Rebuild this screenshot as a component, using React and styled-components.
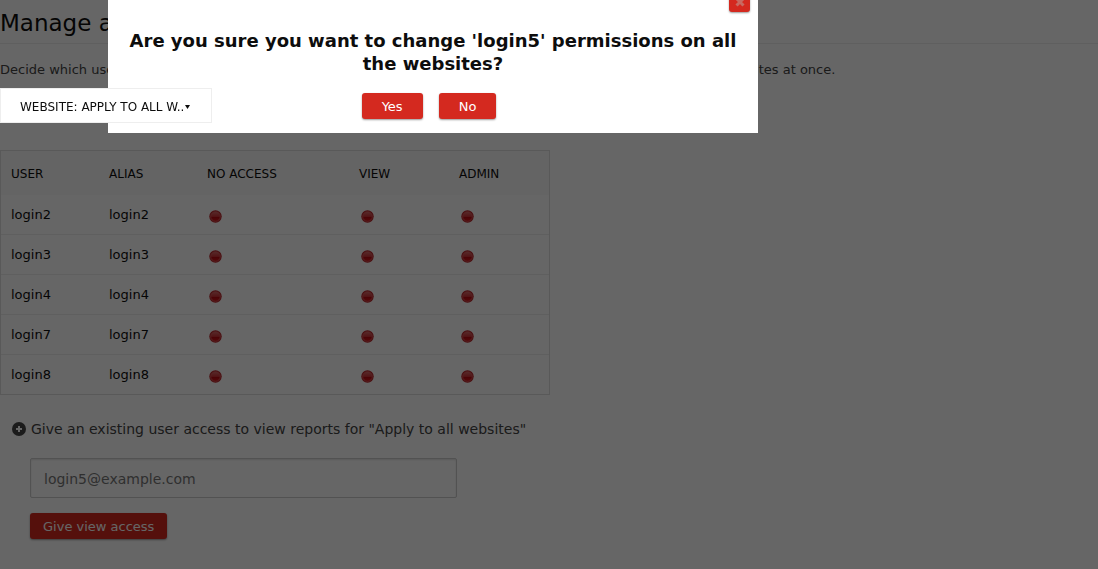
import React from "react";
import styled, { createGlobalStyle } from "styled-components";

const GlobalStyle = createGlobalStyle`
  * { box-sizing: border-box; }
  body {
    margin: 0;
    background: #fff;
    color: #0d0d0d;
    font-family: "DejaVu Sans", Verdana, sans-serif;
    font-size: 13px;
  }
  button, input, select { font-family: inherit; }
`;

const Page = styled.main`
  min-height: 100vh;
  padding-bottom: 30px;
`;

const PageTitle = styled.h1`
  margin: 0;
  padding: 8px 0 5px;
  border-bottom: 1px solid #eee;
  font-size: 23px;
  font-weight: 400;
  line-height: 30px;
`;

const Intro = styled.p`
  margin: 16px 0 8px;
  color: #444;
  line-height: 20px;
  white-space: nowrap;
`;

const SiteSelector = styled.label`
  position: relative;
  z-index: 30;
  display: block;
  width: 212px;
`;

const SiteSelect = styled.select`
  display: block;
  width: 100%;
  height: 35px;
  padding: 3px 20px 0 19px;
  border: 1px solid #eee;
  border-radius: 0;
  appearance: none;
  background: #fff;
  color: #0d0d0d;
  font-size: 12px;
  text-transform: uppercase;
`;

const SelectArrow = styled.svg`
  position: absolute;
  top: 17px;
  right: 22px;
  width: 5px;
  height: 4px;
  pointer-events: none;
`;

const AccessTable = styled.table`
  width: 550px;
  max-width: 100%;
  margin: 27px 0 24px;
  border: 1px solid #dedede;
  border-bottom: 0;
  border-collapse: separate;
  border-spacing: 0;
  table-layout: fixed;
`;

const HeadCell = styled.th`
  width: ${(p) => p.$width || "auto"};
  height: 44px;
  padding: 2px 10px 0;
  background: #f9f9f9;
  font-size: 12px;
  font-weight: 400;
  text-align: left;
  text-transform: uppercase;
`;

const Cell = styled.td`
  height: 40px;
  padding: 0 10px;
  border-bottom: 1px solid #eee;
  tr:last-child & { border-bottom-color: #dedede; }
`;

const AccessButton = styled.button`
  display: block;
  width: 16px;
  height: 16px;
  margin-top: 2px;
  padding: 0;
  border: 0;
  background: none;
`;

const AddUser = styled.section`
  padding: 0 12px;
`;

const AddUserTitle = styled.label`
  display: flex;
  align-items: center;
  gap: 5px;
  height: 20px;
  color: #444;
  font-size: 14px;
  white-space: nowrap;
`;

const AddUserForm = styled.form`
  display: flex;
  flex-direction: column;
  align-items: flex-start;
  gap: 15px;
  padding: 19px 18px 0;
`;

const TextInput = styled.input`
  width: 427px;
  max-width: 100%;
  height: 40px;
  padding: 2px 13px 0;
  border: 1px solid #ccc;
  border-radius: 2px;
  background: #fff;
  box-shadow: inset 0 1px 2px rgba(0, 0, 0, 0.12);
  color: #777;
  font-size: 14px;
`;

const ActionButton = styled.button`
  height: 26px;
  padding: 1px ${(p) => (p.$wide ? 20 : 13)}px 0;
  border: 0;
  border-radius: 3px;
  background: #d4291f;
  box-shadow: 0 1px 2px rgba(0, 0, 0, 0.4);
  color: #fff;
  font-size: 13px;
`;

const Overlay = styled.div`
  position: fixed;
  inset: 0;
  z-index: 10;
  background: rgba(0, 0, 0, 0.6);
`;

const Dialog = styled.div`
  position: absolute;
  top: 0;
  left: 108px;
  z-index: 20;
  width: 650px;
  padding: 29px 20px 14px;
  background: #fff;
`;

const DialogTitle = styled.h2`
  margin: 0;
  font-size: 18px;
  line-height: 23px;
  text-align: center;
`;

const DialogActions = styled.div`
  display: flex;
  justify-content: center;
  gap: 16px;
  margin-top: 18px;
  padding-right: 8px;
`;

const CloseButton = styled.button`
  position: absolute;
  top: -9px;
  right: 8px;
  display: grid;
  place-items: center;
  width: 21px;
  height: 21px;
  padding: 0;
  border: 0;
  border-radius: 3px;
  background: #d4291f;
  box-shadow: 0 1px 2px rgba(0, 0, 0, 0.4);
`;

const StatusDot = () => (
  <svg width="16" height="16" viewBox="0 0 16 16" aria-hidden="true">
    <defs>
      <linearGradient id="gloss" x1="0" y1="0" x2="0" y2="1">
        <stop offset="0" stopColor="#d86a6a" />
        <stop offset="0.5" stopColor="#cc3438" />
        <stop offset="0.6" stopColor="#bc0c12" />
        <stop offset="1" stopColor="#d4181c" />
      </linearGradient>
    </defs>
    <circle cx="8.5" cy="8.5" r="6.2" fill="#b8262a" />
    <circle cx="8.5" cy="8.5" r="4.8" fill="url(#gloss)" stroke="#dc5c5e" strokeWidth="0.8" />
  </svg>
);

const PlusIcon = () => (
  <svg width="14" height="14" viewBox="0 0 14 14" aria-hidden="true">
    <circle cx="7" cy="7" r="7" fill="#444" />
    <path d="M7 4v6M4 7h6" stroke="#fff" strokeWidth="2" />
  </svg>
);

const CrossIcon = () => (
  <svg width="10" height="10" viewBox="0 0 10 10" aria-hidden="true">
    <path d="M1.5 1.5l7 7M8.5 1.5l-7 7" stroke="#c86a62" strokeWidth="3" />
  </svg>
);

const columns = [
  { name: "User", width: "98px" },
  { name: "Alias", width: "98px" },
  { name: "No access", width: "152px" },
  { name: "View", width: "100px" },
  { name: "Admin" },
];
const levels = ["No access", "View", "Admin"];
const users = ["login2", "login3", "login4", "login7", "login8"];

export default function App() {
  return (
    <>
      <GlobalStyle />
      <Page>
        <PageTitle>Manage access</PageTitle>
        <Intro>
          Decide which users have which Piwik permission on your websites. You can also set permissions for all of your websites at once.
        </Intro>
        <SiteSelector>
          <SiteSelect aria-label="Website">
            <option>Website: Apply to all w..</option>
          </SiteSelect>
          <SelectArrow viewBox="0 0 5 4" aria-hidden="true">
            <path d="M0 0h5L2.5 4z" fill="#0d0d0d" />
          </SelectArrow>
        </SiteSelector>
        <AccessTable>
          <thead>
            <tr>
              {columns.map((c) => (
                <HeadCell key={c.name} $width={c.width}>{c.name}</HeadCell>
              ))}
            </tr>
          </thead>
          <tbody>
            {users.map((user) => (
              <tr key={user}>
                <Cell>{user}</Cell>
                <Cell>{user}</Cell>
                {levels.map((level) => (
                  <Cell key={level}>
                    <AccessButton type="button" aria-label={`${level} for ${user}`}>
                      <StatusDot />
                    </AccessButton>
                  </Cell>
                ))}
              </tr>
            ))}
          </tbody>
        </AccessTable>
        <AddUser>
          <AddUserTitle htmlFor="user-email">
            <PlusIcon />
            Give an existing user access to view reports for "Apply to all websites"
          </AddUserTitle>
          <AddUserForm>
            <TextInput id="user-email" type="text" defaultValue="login5@example.com" />
            <ActionButton type="button">Give view access</ActionButton>
          </AddUserForm>
        </AddUser>
      </Page>
      <Overlay />
      <Dialog role="dialog" aria-labelledby="confirm-title">
        <CloseButton type="button" aria-label="Close">
          <CrossIcon />
        </CloseButton>
        <DialogTitle id="confirm-title">
          Are you sure you want to change 'login5' permissions on all the websites?
        </DialogTitle>
        <DialogActions>
          <ActionButton type="button" $wide>Yes</ActionButton>
          <ActionButton type="button" $wide>No</ActionButton>
        </DialogActions>
      </Dialog>
    </>
  );
}
